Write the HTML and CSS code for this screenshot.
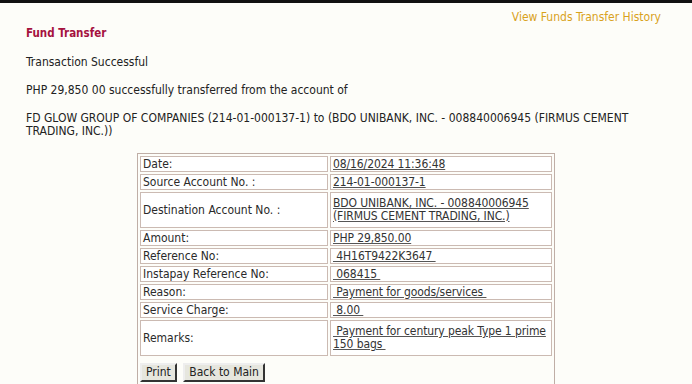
FILE: index.html
```html
<!DOCTYPE html>
<html lang="en">
<head>
  <meta charset="UTF-8">
  <title>Fund Transfer</title>
  <link rel="stylesheet" href="styles.css">
</head>
<body>
  <div class="topbar"></div>

  <div class="page">
    <div class="history-link"><a href="#">View Funds Transfer History</a></div>
    <h1 class="page-title">Fund Transfer</h1>

    <p class="msg">Transaction Successful</p>
    <p class="msg">PHP 29,850 00 successfully transferred from the account of</p>
    <p class="msg">FD GLOW GROUP OF COMPANIES (214-01-000137-1) to (BDO UNIBANK, INC. - 008840006945 (FIRMUS CEMENT TRADING, INC.))</p>

    <table class="details" cellspacing="2">
      <tr>
        <td class="label">Date:</td>
        <td class="value"><u>08/16/2024 11:36:48</u></td>
      </tr>
      <tr>
        <td class="label">Source Account No. :</td>
        <td class="value"><u>214-01-000137-1</u></td>
      </tr>
      <tr class="tall">
        <td class="label">Destination Account No. :</td>
        <td class="value"><u>BDO UNIBANK, INC. - 008840006945<br>(FIRMUS CEMENT TRADING, INC.)</u></td>
      </tr>
      <tr>
        <td class="label">Amount:</td>
        <td class="value"><u>PHP 29,850.00</u></td>
      </tr>
      <tr>
        <td class="label">Reference No:</td>
        <td class="value"><u>&nbsp;4H16T9422K3647&nbsp;</u></td>
      </tr>
      <tr>
        <td class="label">Instapay Reference No:</td>
        <td class="value"><u>&nbsp;068415&nbsp;</u></td>
      </tr>
      <tr>
        <td class="label">Reason:</td>
        <td class="value"><u>&nbsp;Payment for goods/services&nbsp;</u></td>
      </tr>
      <tr>
        <td class="label">Service Charge:</td>
        <td class="value"><u>&nbsp;8.00&nbsp;</u></td>
      </tr>
      <tr class="tall">
        <td class="label">Remarks:</td>
        <td class="value"><u>&nbsp;Payment for century peak Type 1 prime<br>150 bags&nbsp;</u></td>
      </tr>
      <tr>
        <td class="actions" colspan="2">
          <button class="btn">Print</button>
          <button class="btn">Back to Main</button>
        </td>
      </tr>
    </table>
  </div>
</body>
</html>
```

FILE: styles.css
```css
* {
  margin: 0;
  padding: 0;
  box-sizing: border-box;
}

body {
  font-family: 'DejaVu Sans Condensed', 'DejaVu Sans', sans-serif;
  background: #fdfdf9;
  color: #222;
  overflow: hidden;
}

.topbar {
  height: 3px;
  background: #111;
}

.page {
  padding: 0 0 0 26px;
}

.history-link {
  text-align: right;
  padding: 7px 31px 0 0;
  font-size: 12px;
  line-height: 14px;
}

.history-link a {
  color: #d9a21c;
  text-decoration: none;
}

.page-title {
  font-size: 11.5px;
  line-height: 14px;
  font-weight: bold;
  color: #a5123f;
  margin-top: 2px;
  margin-bottom: 16px;
}

.msg {
  font-size: 12px;
  line-height: 13px;
  margin-bottom: 15px;
  padding-right: 50px;
}

.details {
  width: 418px;
  margin: 1px 0 0 111px;
  border: 1px solid #bfaea6;
  border-collapse: separate;
  font-size: 12px;
  background: #fdfdf9;
}

.details td {
  border: 1px solid #cbbab2;
  padding: 0 2px;
  line-height: 14px;
  background: #fff;
  vertical-align: middle;
}

.details tr.tall td {
  padding: 4px 2px;
  line-height: 13px;
}

.details td.label {
  width: 188px;
  color: #2a2a2a;
}

.details td.value {
  color: #333;
  white-space: nowrap;
  letter-spacing: -0.1px;
}

.details td.value u {
  text-decoration-color: #555;
}

.details td.actions {
  border: none;
  background: transparent;
  padding: 5px 0 2px 0;
}

.btn {
  font-family: 'DejaVu Sans Condensed', 'DejaVu Sans', sans-serif;
  font-size: 12px;
  line-height: 13px;
  padding: 1px 4px;
  background: #e6e6de;
  color: #222;
  border: 2px solid;
  border-color: #eee #333 #333 #eee;
  margin-right: 3px;
}
```
